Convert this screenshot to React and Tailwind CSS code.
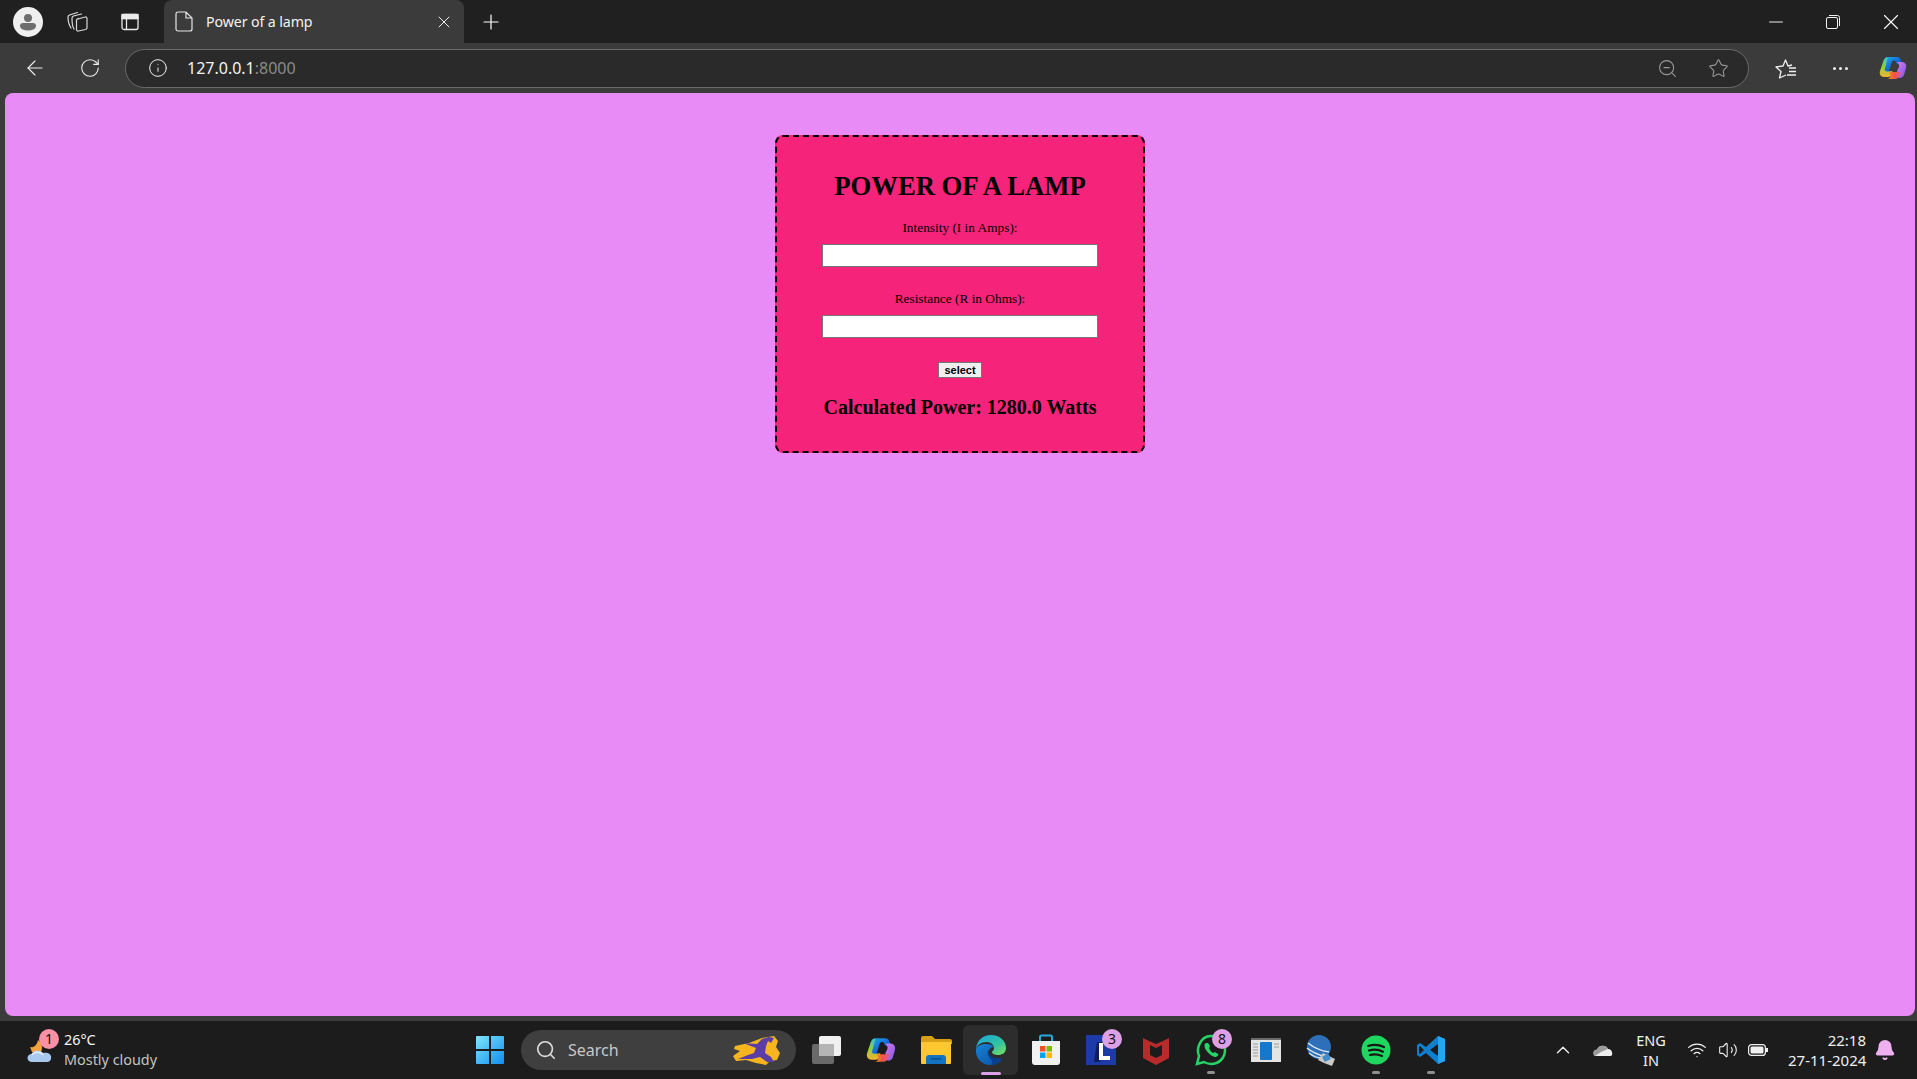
import React from 'react';
import { ArrowLeft, RotateCw, Info, ZoomOut, Star, X, Plus, Minus, Search, ChevronUp, Wifi, Volume2, Bell } from 'lucide-react';

const Copilot = ({ size = 28, id = 'c' }) => (
  <svg width={size} height={size} viewBox="0 0 28 28">
    <defs>
      <linearGradient id={`${id}a`} x1="0" y1="0" x2="1" y2="1">
        <stop offset="0" stopColor="#1fb6e8" />
        <stop offset="0.55" stopColor="#1463d8" />
        <stop offset="1" stopColor="#0b3fa8" />
      </linearGradient>
      <linearGradient id={`${id}b`} x1="0" y1="0" x2="0" y2="1">
        <stop offset="0" stopColor="#35c4e0" />
        <stop offset="0.5" stopColor="#8ed13c" />
        <stop offset="1" stopColor="#f6b32d" />
      </linearGradient>
      <linearGradient id={`${id}c`} x1="0" y1="0" x2="1" y2="1">
        <stop offset="0" stopColor="#d77be8" />
        <stop offset="1" stopColor="#7d54e6" />
      </linearGradient>
      <linearGradient id={`${id}d`} x1="0" y1="0" x2="1" y2="0">
        <stop offset="0" stopColor="#f6a02d" />
        <stop offset="0.5" stopColor="#f2553c" />
        <stop offset="1" stopColor="#e0559a" />
      </linearGradient>
    </defs>
    <path d="M9 3h9c2 0 3 1 3.500 2.500L24 11l-6-1-1-2c-.5-1-1-1.500-2-1.500-1.500 0-2 1-2.500 2.500L9 20 3 19z" fill={`url(#${id}a)`} />
    <path d="M9 3C6 3 5 5 4 8L1 17c-1 3 1 6 4 6h4c2 0 3-1 3.500-3l1-3-5 .5C6 17.500 5 16 6 14z" fill={`url(#${id}b)`} />
    <path d="M18 8h5c3 0 5 3 4 6l-2 7c-1 2-2 3-5 3l-2-7 2-4c.5-1.500 0-3-2-5z" fill={`url(#${id}c)`} />
    <path d="M10 18h12c-1 5-3 7-6 7H8c2 0 3-1 3.500-3z" fill={`url(#${id}d)`} />
  </svg>
);

const WeatherIcon = () => (
  <svg width="32" height="32" viewBox="0 0 32 32">
    <path d="M6 13c3 1 7-1 8-7 4 3 5 8 3 12H8z" fill="#f2a33a" />
    <path d="M8 28c-6 0-6-8 0-8 1-4 8-5 11-1 6-1 9 2 8 6-.5 2-2 3-4 3z" fill="#a9c8ee" />
    <path d="M8 21c1-3 8-4 11 0" fill="none" stroke="#dce9fa" strokeWidth="2" />
  </svg>
);

const WindowsLogo = () => (
  <svg width="30" height="30" viewBox="0 0 30 30">
    <defs>
      <linearGradient id="win" x1="0" y1="0" x2="1" y2="1">
        <stop offset="0" stopColor="#7fe6fb" />
        <stop offset="1" stopColor="#0f8dee" />
      </linearGradient>
    </defs>
    <path d="M1 2a1 1 0 0 1 1-1h12v13H1zM16 1h12a1 1 0 0 1 1 1v12H16zM1 16h13v13H2a1 1 0 0 1-1-1zM16 16h13v12a1 1 0 0 1-1 1H16z" fill="url(#win)" />
  </svg>
);

const SearchDoodle = () => (
  <svg width="48" height="32" viewBox="8 5 48 32">
    <path d="M11 17L25 14L38 9L50 7L54 12L52 18L56 24L53 31L46 32L42 36L32 34L22 31L12 32L9 27L16 22L10 20z" fill="#f5b51e" />
    <path d="M19 14L33 15L38 10L45 8L50 9L47 14L44 12L42 17L41 24L47 28L50 33L43 33L36 28L28 30L14 30L24 26L30 24L32 19z" fill="#5a3ea6" />
  </svg>
);

const TaskViewIcon = () => (
  <svg width="32" height="32" viewBox="0 0 32 32">
    <rect x="2" y="10" width="22" height="20" rx="2" fill="#6a6a6a" />
    <rect x="9" y="2" width="22" height="20" rx="2" fill="#f0f0f0" />
    <rect x="9" y="10" width="15" height="12" fill="#b5b5b5" />
  </svg>
);

const FolderIcon = () => (
  <svg width="32" height="30" viewBox="0 0 32 30">
    <path d="M1 3a2 2 0 0 1 2-2h9l3 3h15a2 2 0 0 1 2 2v3H1z" fill="#d9a015" />
    <path d="M1 7h30v21a1 1 0 0 1-1 1H2a1 1 0 0 1-1-1z" fill="#fcc72f" />
    <path d="M6 29v-6a3 3 0 0 1 3-3h14a3 3 0 0 1 3 3v6z" fill="#1474c4" />
    <rect x="11" y="23" width="10" height="1.500" fill="#0b4d8c" />
  </svg>
);

const EdgeIcon = () => (
  <svg width="32" height="32" viewBox="0 0 32 32">
    <defs>
      <linearGradient id="edgeTop" x1="0" y1="0" x2="1" y2="1">
        <stop offset="0" stopColor="#1aa5e0" />
        <stop offset="0.6" stopColor="#32c4a0" />
        <stop offset="1" stopColor="#7fe05a" />
      </linearGradient>
      <linearGradient id="edgeLow" x1="0" y1="0" x2="1" y2="1">
        <stop offset="0" stopColor="#1583d6" />
        <stop offset="1" stopColor="#0b4fa5" />
      </linearGradient>
    </defs>
    <path d="M1 15C2 6 8 1 16 1c9 0 15 6 15 13 0 5-4 7-8 7-3 0-6-1-6-3 0-1 2-1 2-4 0-3-3-6-7-6-6 0-10 3-11 7z" fill="url(#edgeTop)" />
    <path d="M1 15c-1 9 6 16 14 16 5 0 9-2 12-5-3 1-7 1-10-1-4-2-5-6-3-9 1-2 3-3 5-3-2-2-4-3-7-3C6 10 2 12 1 15z" fill="url(#edgeLow)" />
    <path d="M13 16c0 5 5 9 11 8 1 0 2 0 3 1-3 4-8 6-12 6 4-1 2-4 0-7-2-3-3-5-2-8z" fill="#0a3f8f" />
  </svg>
);

const StoreIcon = () => (
  <svg width="30" height="32" viewBox="0 0 30 32">
    <path d="M9 7V3a1.500 1.500 0 0 1 1.500-1.500h9A1.500 1.500 0 0 1 21 3v4" fill="none" stroke="#25a9e0" strokeWidth="2" />
    <path d="M1 7h28v21a3 3 0 0 1-3 3H4a3 3 0 0 1-3-3z" fill="#f1f1f1" />
    <rect x="9" y="12" width="5.500" height="5.500" fill="#f25022" />
    <rect x="15.500" y="12" width="5.500" height="5.500" fill="#7fba00" />
    <rect x="9" y="18.500" width="5.500" height="5.500" fill="#00a4ef" />
    <rect x="15.500" y="18.500" width="5.500" height="5.500" fill="#ffb900" />
  </svg>
);

const LAppIcon = () => (
  <svg width="30" height="30" viewBox="0 0 30 30">
    <rect width="30" height="30" fill="#1c3aa8" />
    <path d="M8 27l3-20h6l-3 20z" fill="#0f1f5c" />
    <path d="M13 8h4v13h7v4H13z" fill="#ffffff" />
  </svg>
);

const McAfeeIcon = () => (
  <svg width="28" height="30" viewBox="0 0 28 30">
    <path d="M1 3l6 3 7 3 7-3 6-3v20l-13 7L1 23z" fill="#b92b2b" />
    <path d="M8 10l6 3 6-3v10l-6 3-6-3z" fill="#1c1c1c" />
  </svg>
);

const WhatsAppIcon = () => (
  <svg width="32" height="32" viewBox="0 0 32 32">
    <path d="M2 30l2-8C1 15 5 2 16 2c8 0 14 6 14 14s-6 14-14 14c-3 0-5-1-7-2z" fill="none" stroke="#25d366" strokeWidth="2.500" />
    <path d="M11 9c-2 1-2 4 0 7s5 6 9 7c2 0 4-2 3-3l-3-2-2 1c-2-1-3-3-4-5l1-2-2-3z" fill="#25d366" />
  </svg>
);

const WindowAppIcon = () => (
  <svg width="30" height="24" viewBox="0 0 30 24">
    <rect width="30" height="24" fill="#e4e4e4" />
    <rect width="30" height="2" fill="#6b6b6b" />
    <rect x="9" y="4" width="12" height="18" rx="1" fill="#1678cc" />
    <path d="M2 6h5M2 9h5M2 12h5M2 15h5M2 18h5M23 6h5M23 9h5" stroke="#9a9a9a" strokeWidth="1" />
  </svg>
);

const GlobeAppIcon = () => (
  <svg width="30" height="32" viewBox="0 0 30 32">
    <circle cx="13" cy="13" r="12" fill="#2d6fb8" />
    <path d="M2 9c6 5 14 8 21 9M1 14c6 5 12 7 19 9M3 19c4 3 8 5 12 5" fill="none" stroke="#dbe7f3" strokeWidth="1.500" />
    <path d="M18 29l-6-3 5-7 12 6-3 7z" fill="#c9c9c9" />
    <rect x="17" y="21" width="7" height="6" rx="1" fill="#3f8ccb" transform="rotate(-25 20 24)" />
  </svg>
);

const SpotifyIcon = () => (
  <svg width="30" height="30" viewBox="0 0 30 30">
    <circle cx="15" cy="15" r="14.500" fill="#1ed760" />
    <path d="M7 11c6-2 11-1.500 16 1M8 15.500c5-1.500 10-1 14 1.200M9 20c4-1 8-.7 12 1" fill="none" stroke="#161616" strokeWidth="2.200" strokeLinecap="round" />
  </svg>
);

const VsCodeIcon = () => (
  <svg width="30" height="30" viewBox="0 0 30 30">
    <path d="M22 1l7 3v22l-7 3-12-11-6 4-3-2v-10l3-2 6 4z" fill="#0f7fd0" />
    <path d="M22 1l7 3v22l-7 3z" fill="#24a7f0" />
    <path d="M22 9l-8 6 8 6z" fill="#1c1c1c" />
    <path d="M4 11l-1 1v6l1 1 4-4z" fill="#1c1c1c" />
  </svg>
);

const Badge = ({ children, className }) => (
  <span className={`absolute flex items-center justify-center rounded-full text-[14px] leading-none text-[#111] font-['Noto_Sans',sans-serif] ${className}`}>
    {children}
  </span>
);

const TaskSlot = ({ children, dot, active }) => (
  <div className={`relative flex h-[50px] w-[55px] shrink-0 items-center justify-center rounded-md ${active ? 'bg-[#2d2d2d]' : ''}`}>
    {children}
    {dot && <span className="absolute bottom-[1px] h-[3px] w-[8px] rounded-full bg-[#8f8f8f]" />}
    {active && <span className="absolute bottom-0 h-[3px] w-[20px] rounded-full bg-[#dba0e6]" />}
  </div>
);

const Field = ({ label, className }) => (
  <div className={className}>
    <label className="block h-4 text-[13.330px] leading-4 text-black">{label}</label>
    <input
      type="text"
      className="mx-auto mt-2 block h-[23px] w-[276px] border border-[#767676] bg-white"
    />
  </div>
);

export default function App() {
  return (
    <div className="flex h-screen w-full flex-col overflow-hidden bg-[#3b3b3b] font-['Noto_Sans',sans-serif]">
      {/* barre des onglets */}
      <div className="flex h-[43px] shrink-0 items-end bg-[#202020] text-white">
        <div className="flex h-[43px] w-[56px] shrink-0 items-center justify-end pr-[13px]">
          <div className="flex h-[30px] w-[30px] items-center justify-center rounded-full bg-[#efefef]">
            <svg width="22" height="22" viewBox="0 0 22 22">
              <circle cx="11" cy="7" r="4" fill="#6e6e6e" />
              <path d="M3 15a3 3 0 0 1 3-3h10a3 3 0 0 1 3 3c0 3-4 4.500-8 4.500S3 18 3 15z" fill="#6e6e6e" />
            </svg>
          </div>
        </div>
        <div className="flex h-[43px] w-[42px] shrink-0 items-center justify-center">
          <svg width="24" height="26" viewBox="5 3 24 26" fill="none" stroke="#d8d8d8" strokeWidth="1.200" strokeLinecap="round">
            <path d="M18 13l7-2a1.500 1.500 0 0 1 2 1.500v9a2 2 0 0 1-1.500 2l-7 1.500a1.500 1.500 0 0 1-2-1.500v-9a2 2 0 0 1 1.500-2z" />
            <path d="M14 23c-2-3-2-7-2-11 0-1 .5-1.500 1.500-2l8-2" />
            <path d="M11 22c-2-3-3-8-3-11 0-1 .5-1.500 1.500-2l8-2.500" />
          </svg>
        </div>
        <div className="flex h-[43px] w-[64px] shrink-0 items-center justify-center">
          <svg width="18" height="18" viewBox="0 0 18 18" fill="none" stroke="#ececec" strokeWidth="1.300">
            <rect x="1" y="1.500" width="16" height="15" rx="2" />
            <path d="M1 5.500h16M5.500 5.500v11" />
            <rect x="1" y="1.500" width="16" height="4" fill="#ececec" />
          </svg>
        </div>
        <div className="ml-[2px] flex h-[43px] w-[300px] shrink-0 items-center rounded-t-lg bg-[#3b3b3b] pl-[11px] pr-[10px]">
          <svg width="18" height="21" viewBox="0 0 18 21" fill="none" stroke="#e6e6e6" strokeWidth="1.200">
            <path d="M3 1h8l6 6v11a2 2 0 0 1-2 2H3a2 2 0 0 1-2-2V3a2 2 0 0 1 2-2zM11 1v6h6" />
          </svg>
          <span className="ml-[13px] flex-1 text-[14.200px] tracking-[-0.1px] text-[#f2f2f2]">Power of a lamp</span>
          <X size={20} strokeWidth={1.2} className="text-[#eeeeee]" />
        </div>
        <div className="flex h-[43px] w-[54px] shrink-0 items-center justify-center">
          <Plus size={24} strokeWidth={1.2} />
        </div>
        <div className="flex h-[43px] flex-1 items-center justify-end">
          <div className="flex w-[50px] justify-center"><Minus size={22} strokeWidth={1} /></div>
          <div className="flex w-[64px] justify-center">
            <svg width="14" height="14" viewBox="0 0 14 14" fill="none" stroke="#f0f0f0" strokeWidth="1">
              <rect x="0.500" y="2.500" width="11" height="11" rx="1.500" />
              <path d="M3 .5h8.500A2 2 0 0 1 13.500 2.500V11" />
            </svg>
          </div>
          <div className="flex w-[52px] justify-center"><X size={26} strokeWidth={1} /></div>
        </div>
      </div>

      {/* barre d'adresse */}
      <div className="flex h-[50px] shrink-0 items-center bg-[#3b3b3b] text-[#efefef]">
        <div className="flex w-[62px] shrink-0 justify-center pl-[8px]"><ArrowLeft size={24} strokeWidth={1.1} /></div>
        <div className="flex w-[55px] shrink-0 justify-center"><RotateCw size={22} strokeWidth={1.2} /></div>
        <div className="ml-[8px] flex h-[39px] w-[1624px] shrink-0 items-center rounded-full border border-[#6a6a6a] bg-[#2a2a2a] pl-[22px] pr-[19px]">
          <Info size={20} strokeWidth={1.2} />
          <span className="ml-[19px] flex-1 text-[16px]">
            <span className="text-[#f4f4f4]">127.0.0.1</span>
            <span className="text-[#8a8a8a]">:8000</span>
          </span>
          <ZoomOut size={21} strokeWidth={1.2} className="text-[#9a9a9a]" />
          <Star size={21} strokeWidth={1.2} className="ml-[30px] text-[#9a9a9a]" />
        </div>
        <div className="flex flex-1 items-center">
          <div className="flex w-[72px] justify-center pl-[2px]">
            <svg width="26" height="24" viewBox="7 4 26 24" fill="none" stroke="#f0f0f0" strokeWidth="1.300" strokeLinejoin="round">
              <path d="M26 13L22 14L19.500 8L17 14L10 15L15 19.500L13.500 26L20 23" />
              <path d="M23 16H30M23 19.500H30M21 23H30" />
            </svg>
          </div>
          <div className="flex w-[38px] justify-center gap-[3px]">
            <span className="h-[3px] w-[3px] rounded-full bg-[#eeeeee]" />
            <span className="h-[3px] w-[3px] rounded-full bg-[#eeeeee]" />
            <span className="h-[3px] w-[3px] rounded-full bg-[#eeeeee]" />
          </div>
          <div className="flex w-[68px] justify-center"><Copilot id="top" /></div>
        </div>
      </div>

      {/* page */}
      <main className="ml-[5px] mr-[2px] flex min-h-0 flex-1 justify-center rounded-lg bg-[#e88bf6] pt-[42px]">
        <div className="h-[318px] w-[370px] rounded-lg border-2 border-dashed border-black bg-[#f5247a] pt-[33px] text-center font-['Liberation_Serif',serif]">
          <h1 className="h-8 text-[26.670px] font-bold leading-8 text-black">POWER OF A LAMP</h1>
          <Field label="Intensity (I in Amps):" className="mt-[18px]" />
          <Field label="Resistance (R in Ohms):" className="mt-[24px]" />
          <button className="mt-[24px] h-4 w-[44px] border border-[#767676] bg-[#efefef] font-['Liberation_Sans',sans-serif] text-[11px] font-bold leading-none text-black">
            select
          </button>
          <p className="mt-[14px] h-6 text-[20px] font-bold leading-6 text-black">Calculated Power: 1280.0 Watts</p>
        </div>
      </main>

      {/* barre des taches */}
      <footer className="mt-[5px] flex h-[58px] shrink-0 items-center bg-[#1c1c1c]">
        <div className="relative flex w-[464px] shrink-0 items-center pl-[24px]">
          <WeatherIcon />
          <Badge className="left-[39px] top-[-1px] h-[20px] w-[20px] bg-[#fb8fa4]">1</Badge>
          <div className="ml-[8px] text-[14.400px] leading-[20px]">
            <div className="text-[#f4f4f4]">26°C</div>
            <div className="text-[#c4c4c4]">Mostly cloudy</div>
          </div>
        </div>
        <div className="flex w-[52px] shrink-0 justify-center"><WindowsLogo /></div>
        <div className="ml-[5px] flex h-[40px] w-[275px] shrink-0 items-center rounded-full bg-[#3f3f3f] pl-[14px] pr-[16px]">
          <Search size={22} strokeWidth={1.8} className="text-[#dddddd]" />
          <span className="ml-[11px] flex-1 text-[16px] text-[#c8c8c8]">Search</span>
          <SearchDoodle />
        </div>
        <div className="ml-[2px] flex">
          <TaskSlot><TaskViewIcon /></TaskSlot>
          <TaskSlot><Copilot size={30} id="bar" /></TaskSlot>
          <TaskSlot><FolderIcon /></TaskSlot>
          <TaskSlot active><EdgeIcon /></TaskSlot>
          <TaskSlot><StoreIcon /></TaskSlot>
          <TaskSlot>
            <LAppIcon />
            <Badge className="right-[6px] top-[4px] h-[20px] w-[20px] bg-[#dba0e6]">3</Badge>
          </TaskSlot>
          <TaskSlot><McAfeeIcon /></TaskSlot>
          <TaskSlot dot>
            <WhatsAppIcon />
            <Badge className="right-[6px] top-[4px] h-[20px] w-[20px] bg-[#dba0e6]">8</Badge>
          </TaskSlot>
          <TaskSlot><WindowAppIcon /></TaskSlot>
          <TaskSlot><GlobeAppIcon /></TaskSlot>
          <TaskSlot dot><SpotifyIcon /></TaskSlot>
          <TaskSlot dot><VsCodeIcon /></TaskSlot>
        </div>
        <div className="flex flex-1 items-center text-[#f0f0f0]">
          <div className="ml-[94px] w-[24px]"><ChevronUp size={22} strokeWidth={1.5} /></div>
          <svg className="ml-[17px]" width="20" height="14" viewBox="0 0 20 14">
            <path d="M2 13C-1 11 1 6 4 7c1-5 9-6 11-1 3 0 5 3 4 6-.3.700-1 1-2 1z" fill="#ededed" />
            <path d="M4 7c1-5 9-6 11-1L8 9 2 13C-1 11 1 6 4 7z" fill="#9a9a9a" />
          </svg>
          <div className="ml-[22px] w-[32px] whitespace-nowrap text-center text-[14.500px] leading-[20px]">
            <div>ENG</div>
            <div>IN</div>
          </div>
          <Wifi size={20} strokeWidth={1.5} className="ml-[20px]" />
          <Volume2 size={20} strokeWidth={1.3} className="ml-[11px]" />
          <svg className="ml-[10px]" width="20" height="12" viewBox="0 0 20 12" fill="none" stroke="#f0f0f0" strokeWidth="1.200">
            <rect x="0.600" y="0.600" width="16.800" height="10.800" rx="3" />
            <rect x="2.500" y="2.500" width="13" height="7" rx="1.500" fill="#f0f0f0" stroke="none" />
            <path d="M19 4v4" strokeWidth="2" />
          </svg>
          <div className="ml-[20px] w-[78px] text-right text-[15px] leading-[20px]">
            <div>22:18</div>
            <div className="whitespace-nowrap">27-11-2024</div>
          </div>
          <Bell size={22} fill="#eeb0f0" stroke="#eeb0f0" className="ml-[8px]" />
        </div>
      </footer>
    </div>
  );
}
